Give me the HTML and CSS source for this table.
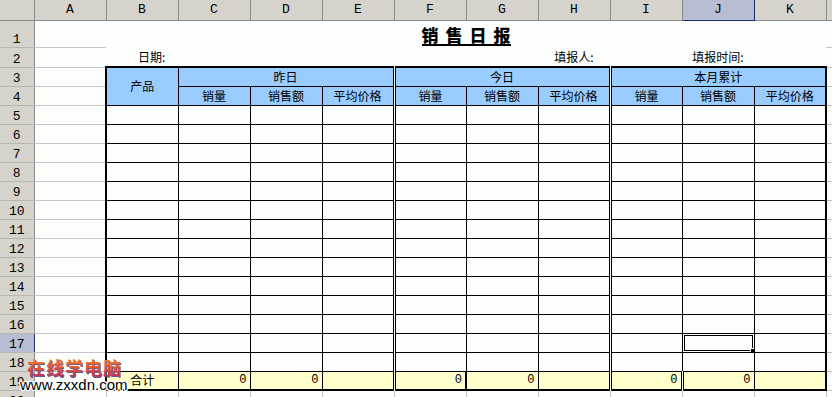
FILE: index.html
```html
<!DOCTYPE html>
<html lang="zh-CN">
<head>
<meta charset="utf-8">
<title>销售日报</title>
<link rel="stylesheet" href="styles.css">
</head>
<body>
<table class="sheet">
  <colgroup>
    <col class="c-rh">
    <col class="c"><col class="c"><col class="c"><col class="c"><col class="c"><col class="c">
    <col class="c"><col class="c"><col class="c"><col class="c"><col class="c">
    <col class="c-l">
  </colgroup>
  <tr class="r-hdr">
    <th class="corner"></th>
    <th class="ch">A</th><th class="ch">B</th><th class="ch">C</th><th class="ch">D</th><th class="ch">E</th><th class="ch">F</th>
    <th class="ch">G</th><th class="ch">H</th><th class="ch">I</th><th class="ch ch-sel">J</th><th class="ch">K</th><th class="ch"></th>
  </tr>
  <tr class="r1">
    <th class="rh">1</th>
    <td class="g g-nr"></td>
    <td colspan="10" class="title"><span class="title-txt">销售日<span class="last">报</span></span></td>
    <td class="g"></td>
  </tr>
  <tr class="r2">
    <th class="rh">2</th>
    <td class="g g-nr"></td>
    <td class="info info-date">日期:</td>
    <td class="blank"></td><td class="blank"></td><td class="blank"></td><td class="blank"></td><td class="blank"></td>
    <td class="info info-c">填报人:</td>
    <td class="blank"></td>
    <td class="info info-c">填报时间:</td>
    <td class="blank"></td>
    <td class="g"></td>
  </tr>
  <tr class="r">
    <th class="rh">3</th>
    <td class="g"></td>
    <td rowspan="2" class="t hd top left">产品</td>
    <td colspan="3" class="t hd top dbl">昨日</td>
    <td colspan="3" class="t hd top dbl">今日</td>
    <td colspan="3" class="t hd top right">本月累计</td>
    <td class="g"></td>
  </tr>
  <tr class="r">
    <th class="rh">4</th>
    <td class="g"></td>
    <td class="t hd">销量</td><td class="t hd">销售额</td><td class="t hd dbl">平均价格</td>
    <td class="t hd">销量</td><td class="t hd">销售额</td><td class="t hd dbl">平均价格</td>
    <td class="t hd">销量</td><td class="t hd">销售额</td><td class="t hd right">平均价格</td>
    <td class="g"></td>
  </tr>
  <tr class="r"><th class="rh">5</th><td class="g"></td><td class="t left"></td><td class="t"></td><td class="t"></td><td class="t dbl"></td><td class="t"></td><td class="t"></td><td class="t dbl"></td><td class="t"></td><td class="t"></td><td class="t right"></td><td class="g"></td></tr>
  <tr class="r"><th class="rh">6</th><td class="g"></td><td class="t left"></td><td class="t"></td><td class="t"></td><td class="t dbl"></td><td class="t"></td><td class="t"></td><td class="t dbl"></td><td class="t"></td><td class="t"></td><td class="t right"></td><td class="g"></td></tr>
  <tr class="r"><th class="rh">7</th><td class="g"></td><td class="t left"></td><td class="t"></td><td class="t"></td><td class="t dbl"></td><td class="t"></td><td class="t"></td><td class="t dbl"></td><td class="t"></td><td class="t"></td><td class="t right"></td><td class="g"></td></tr>
  <tr class="r"><th class="rh">8</th><td class="g"></td><td class="t left"></td><td class="t"></td><td class="t"></td><td class="t dbl"></td><td class="t"></td><td class="t"></td><td class="t dbl"></td><td class="t"></td><td class="t"></td><td class="t right"></td><td class="g"></td></tr>
  <tr class="r"><th class="rh">9</th><td class="g"></td><td class="t left"></td><td class="t"></td><td class="t"></td><td class="t dbl"></td><td class="t"></td><td class="t"></td><td class="t dbl"></td><td class="t"></td><td class="t"></td><td class="t right"></td><td class="g"></td></tr>
  <tr class="r"><th class="rh">10</th><td class="g"></td><td class="t left"></td><td class="t"></td><td class="t"></td><td class="t dbl"></td><td class="t"></td><td class="t"></td><td class="t dbl"></td><td class="t"></td><td class="t"></td><td class="t right"></td><td class="g"></td></tr>
  <tr class="r"><th class="rh">11</th><td class="g"></td><td class="t left"></td><td class="t"></td><td class="t"></td><td class="t dbl"></td><td class="t"></td><td class="t"></td><td class="t dbl"></td><td class="t"></td><td class="t"></td><td class="t right"></td><td class="g"></td></tr>
  <tr class="r"><th class="rh">12</th><td class="g"></td><td class="t left"></td><td class="t"></td><td class="t"></td><td class="t dbl"></td><td class="t"></td><td class="t"></td><td class="t dbl"></td><td class="t"></td><td class="t"></td><td class="t right"></td><td class="g"></td></tr>
  <tr class="r"><th class="rh">13</th><td class="g"></td><td class="t left"></td><td class="t"></td><td class="t"></td><td class="t dbl"></td><td class="t"></td><td class="t"></td><td class="t dbl"></td><td class="t"></td><td class="t"></td><td class="t right"></td><td class="g"></td></tr>
  <tr class="r"><th class="rh">14</th><td class="g"></td><td class="t left"></td><td class="t"></td><td class="t"></td><td class="t dbl"></td><td class="t"></td><td class="t"></td><td class="t dbl"></td><td class="t"></td><td class="t"></td><td class="t right"></td><td class="g"></td></tr>
  <tr class="r"><th class="rh">15</th><td class="g"></td><td class="t left"></td><td class="t"></td><td class="t"></td><td class="t dbl"></td><td class="t"></td><td class="t"></td><td class="t dbl"></td><td class="t"></td><td class="t"></td><td class="t right"></td><td class="g"></td></tr>
  <tr class="r"><th class="rh">16</th><td class="g"></td><td class="t left"></td><td class="t"></td><td class="t"></td><td class="t dbl"></td><td class="t"></td><td class="t"></td><td class="t dbl"></td><td class="t"></td><td class="t"></td><td class="t right"></td><td class="g"></td></tr>
  <tr class="r"><th class="rh rh-sel">17</th><td class="g"></td><td class="t left"></td><td class="t"></td><td class="t"></td><td class="t dbl"></td><td class="t"></td><td class="t"></td><td class="t dbl"></td><td class="t"></td><td class="t sel"><span class="handle"></span></td><td class="t right"></td><td class="g"></td></tr>
  <tr class="r"><th class="rh">18</th><td class="g"></td><td class="t left"></td><td class="t"></td><td class="t"></td><td class="t dbl"></td><td class="t"></td><td class="t"></td><td class="t dbl"></td><td class="t"></td><td class="t"></td><td class="t right"></td><td class="g"></td></tr>
  <tr class="r">
    <th class="rh">19</th><td class="g"></td>
    <td class="t sum left bottom center">合计</td>
    <td class="t sum bottom num">0</td><td class="t sum bottom num">0</td><td class="t sum bottom dbl"></td>
    <td class="t sum bottom num thick-r">0</td><td class="t sum bottom num">0</td><td class="t sum bottom dbl"></td>
    <td class="t sum bottom num dbl">0</td><td class="t sum bottom num">0</td><td class="t sum bottom right"></td>
    <td class="g"></td>
  </tr>
  <tr class="r">
    <th class="rh">20</th><td class="g"></td><td class="g"></td><td class="g"></td><td class="g"></td><td class="g"></td><td class="g"></td><td class="g"></td><td class="g"></td><td class="g"></td><td class="g"></td><td class="g"></td><td class="g"></td>
  </tr>
</table>

<div class="watermark">
  <div class="wm-cn">在线学电脑</div>
  <div class="wm-url">www.zxxdn.com</div>
</div>
</body>
</html>
```

FILE: styles.css
```css
html, body {
  margin: 0;
  padding: 0;
}
body {
  width: 832px;
  height: 397px;
  overflow: hidden;
  position: relative;
  background: #fcfefc;
}
.sheet {
  border-collapse: collapse;
  table-layout: fixed;
  width: 846px;
}
.c-rh { width: 34px; }
.c { width: 72px; }
.c-l { width: 20px; }

.sheet td, .sheet th {
  padding: 0;
  font-size: 12px;
  font-weight: normal;
  font-family: "Noto Sans CJK SC", "Liberation Sans", sans-serif;
  white-space: nowrap;
  overflow: hidden;
  line-height: 14px;
  color: #000;
}

.r-hdr { height: 20px; }
.r1 { height: 27px; }
.r2 { height: 20px; }
.r { height: 19px; }

/* headers */
.corner, .ch {
  background: #d6d3cc;
  border-right: 1px solid #8a8a8a;
  border-bottom: 1px solid #8a8a8a;
  font-family: "Liberation Mono", monospace !important;
  font-size: 13px !important;
  text-align: center;
}
.ch-sel {
  background: #b7bdd2;
  border-bottom: 1px solid #1c2c6c;
  border-right: 1px solid #1c2c6c;
}
.rh {
  background: #d6d3cc;
  border-right: 1px solid #8a8a8a;
  border-bottom: 1px solid #b8b6b0;
  font-family: "Liberation Mono", monospace !important;
  font-size: 13px !important;
  text-align: center;
  vertical-align: bottom;
}
.rh-sel {
  background: #b7bdd2;
  border-right: 1px solid #1c2c6c;
}

/* grid cells outside the table */
.g {
  border-right: 1px solid #c8c4cc;
  border-bottom: 1px solid #c8c4cc;
}
.g-nr { border-right: none; }
.blank { border: none; }

/* title */
.title {
  text-align: center;
  vertical-align: top;
  padding-top: 6px !important;
}
.title-txt {
  font-size: 17px;
  font-weight: 900;
  letter-spacing: 7px;
  line-height: 16px;
  display: inline-block;
  border-bottom: 2px solid #000;
  padding-bottom: 1px;
}
.title-txt .last { letter-spacing: 0; }

.info {
  border: none;
  vertical-align: bottom;
  padding-bottom: 2px !important;
}
.info-date { padding-left: 32px !important; }
.info-c { text-align: center; }

/* table cells */
.t {
  border: 1px solid #000;
  background: #fdfefd;
}
.hd {
  background: #99ccff;
  text-align: center;
}
.top { border-top: 2px solid #000; }
.left { border-left: 2px solid #000; }
.right { border-right: 2px solid #000; }
.bottom { border-bottom: 2px solid #000; }
.dbl { border-right: 3px double #000; }
.thick-r { border-right: 2px solid #000; }

.sum { background: #ffffcc; }
.center { text-align: center; }
.num {
  text-align: right;
  padding-right: 3px !important;
  font-family: "Liberation Mono", monospace !important;
}

.sel {
  position: relative;
  box-shadow: inset 0 0 0 1px #fff, inset 0 0 0 2px #000;
}
.handle {
  position: absolute;
  right: -3px;
  bottom: -3px;
  width: 5px;
  height: 5px;
  background: #000;
  border: 1px solid #fff;
}

/* watermark */
.watermark {
  position: absolute;
  left: 20px;
  top: 356px;
}
.wm-cn {
  margin-left: 7px;
  font-family: "Noto Sans CJK SC", sans-serif;
  font-weight: 700;
  font-size: 18px;
  line-height: 22px;
  background: linear-gradient(#ff8a1a, #e0503a 60%, #b0306a);
  -webkit-background-clip: text;
  background-clip: text;
  color: transparent;
  filter: drop-shadow(1px 1px 0 #6e5a8a);
  letter-spacing: 1px;
}
.wm-url {
  font-family: "Liberation Sans", sans-serif;
  font-size: 15px;
  line-height: 14px;
  color: #000;
  text-shadow: 1px 0 #fff, -1px 0 #fff, 0 1px #fff, 0 -1px #fff, 1px 1px #fff, -1px -1px #fff, 1px -1px #fff, -1px 1px #fff;
}
```
